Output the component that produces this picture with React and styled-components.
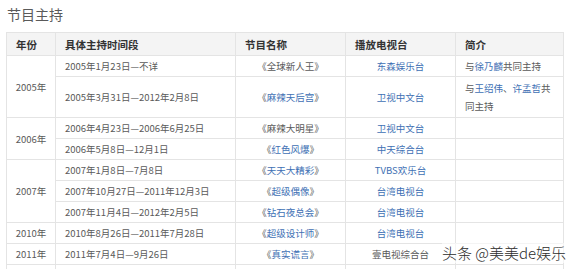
import React from 'react'
import styled, { createGlobalStyle } from 'styled-components'

const GlobalStyle = createGlobalStyle`
    html, body {
        margin: 0;
        padding: 0;
        background: #fff;
    }
    body {
        font-family: "Noto Sans CJK SC", "Noto Sans", sans-serif;
    }
`

const Page = styled.div`
    position: relative;
    width: 576px;
    height: 269px;
    overflow: hidden;
    padding: 4px 0 0 6px;
    box-sizing: border-box;
`

const Title = styled.h2`
    margin: 0 0 8px 1px;
    font-size: 14px;
    line-height: 20px;
    font-weight: 400;
    color: #5a5a5a;
`

const Table = styled.table`
    border-collapse: collapse;
    table-layout: fixed;
    width: 557px;
    font-size: 9.5px;
    color: #5a5a5a;
`

const HeadCell = styled.th`
    height: 22px;
    padding: 0 0 0 9px;
    text-align: left;
    font-size: 10.5px;
    font-weight: 700;
    color: #333;
    background: #f4f4f4;
    border: 1px solid #e4e4e4;
    white-space: nowrap;
`

const Cell = styled.td`
    height: ${p => (p.$tall ? 36 : 20)}px;
    padding: ${p => (p.$tall ? '2px 8px 2px 9px' : '0 0 0 9px')};
    line-height: ${p => (p.$tall ? 18 : 20)}px;
    text-align: ${p => p.$align || 'left'};
    vertical-align: middle;
    border: 1px solid #e4e4e4;
    white-space: nowrap;
    ${p => p.$align === 'center' && 'padding-left: 0;'}
`

const Link = styled.span`
    color: #3e70b4;
`

const Watermark = styled.div`
    position: absolute;
    left: 442px;
    top: 243px;
    font-size: 15px;
    line-height: 20px;
    font-weight: 300;
    color: #2b2b2b;
    white-space: nowrap;
    background: rgba(255, 255, 255, 0.6);
`

const rows = [
    {
        year: '2005年', span: 2, period: '2005年1月23日—不详',
        show: [{ t: '《全球新人王》' }],
        station: [{ t: '东森娱乐台', link: true }],
        intro: [{ t: '与' }, { t: '徐乃麟', link: true }, { t: '共同主持' }],
    },
    {
        period: '2005年3月31日—2012年2月8日', tall: true,
        show: [{ t: '《' }, { t: '麻辣天后宫', link: true }, { t: '》' }],
        station: [{ t: '卫视中文台', link: true }],
        intro: [{ t: '与' }, { t: '王绍伟', link: true }, { t: '、' }, { t: '许孟哲', link: true }, { t: '共' }, { br: true }, { t: '同主持' }],
    },
    {
        year: '2006年', span: 2, period: '2006年4月23日—2006年6月25日',
        show: [{ t: '《麻辣大明星》' }],
        station: [{ t: '卫视中文台', link: true }],
    },
    {
        period: '2006年5月8日—12月1日',
        show: [{ t: '《' }, { t: '红色风爆', link: true }, { t: '》' }],
        station: [{ t: '中天综合台', link: true }],
    },
    {
        year: '2007年', span: 3, period: '2007年1月8日—7月8日',
        show: [{ t: '《' }, { t: '天天大精彩', link: true }, { t: '》' }],
        station: [{ t: 'TVBS欢乐台', link: true }],
    },
    {
        period: '2007年10月27日—2011年12月3日',
        show: [{ t: '《' }, { t: '超级偶像', link: true }, { t: '》' }],
        station: [{ t: '台湾电视台', link: true }],
    },
    {
        period: '2007年11月4日—2012年2月5日',
        show: [{ t: '《' }, { t: '钻石夜总会', link: true }, { t: '》' }],
        station: [{ t: '台湾电视台', link: true }],
    },
    {
        year: '2010年', span: 1, period: '2010年8月26日—2011年7月28日',
        show: [{ t: '《' }, { t: '超级设计师', link: true }, { t: '》' }],
        station: [{ t: '台湾电视台', link: true }],
    },
    {
        year: '2011年', span: 1, period: '2011年7月4日—9月26日',
        show: [{ t: '《' }, { t: '真实谎言', link: true }, { t: '》' }],
        station: [{ t: '壹电视综合台' }],
    },
    {
        year: '', span: 1, period: '',
        show: [], station: [],
    },
]

function Rich({ parts = [] }) {
    return parts.map((p, i) => {
        if (p.br) return <br key={i} />
        return p.link ? <Link key={i}>{p.t}</Link> : <span key={i}>{p.t}</span>
    })
}

export default function App() {
    return (
        <Page>
            <GlobalStyle />
            <Title>节目主持</Title>
            <Table>
                <colgroup>
                    <col style={{ width: 49 }} />
                    <col style={{ width: 180 }} />
                    <col style={{ width: 110 }} />
                    <col style={{ width: 110 }} />
                    <col style={{ width: 108 }} />
                </colgroup>
                <thead>
                    <tr>
                        <HeadCell>年份</HeadCell>
                        <HeadCell>具体主持时间段</HeadCell>
                        <HeadCell>节目名称</HeadCell>
                        <HeadCell>播放电视台</HeadCell>
                        <HeadCell>简介</HeadCell>
                    </tr>
                </thead>
                <tbody>
                    {rows.map((r, i) => (
                        <tr key={i}>
                            {r.year !== undefined && (
                                <Cell $align="center" rowSpan={r.span}>{r.year}</Cell>
                            )}
                            <Cell $tall={r.tall}>{r.period}</Cell>
                            <Cell $align="center"><Rich parts={r.show} /></Cell>
                            <Cell $align="center"><Rich parts={r.station} /></Cell>
                            <Cell $tall={r.tall}><Rich parts={r.intro} /></Cell>
                        </tr>
                    ))}
                </tbody>
            </Table>
            <Watermark>头条 @美美de娱乐</Watermark>
        </Page>
    )
}
